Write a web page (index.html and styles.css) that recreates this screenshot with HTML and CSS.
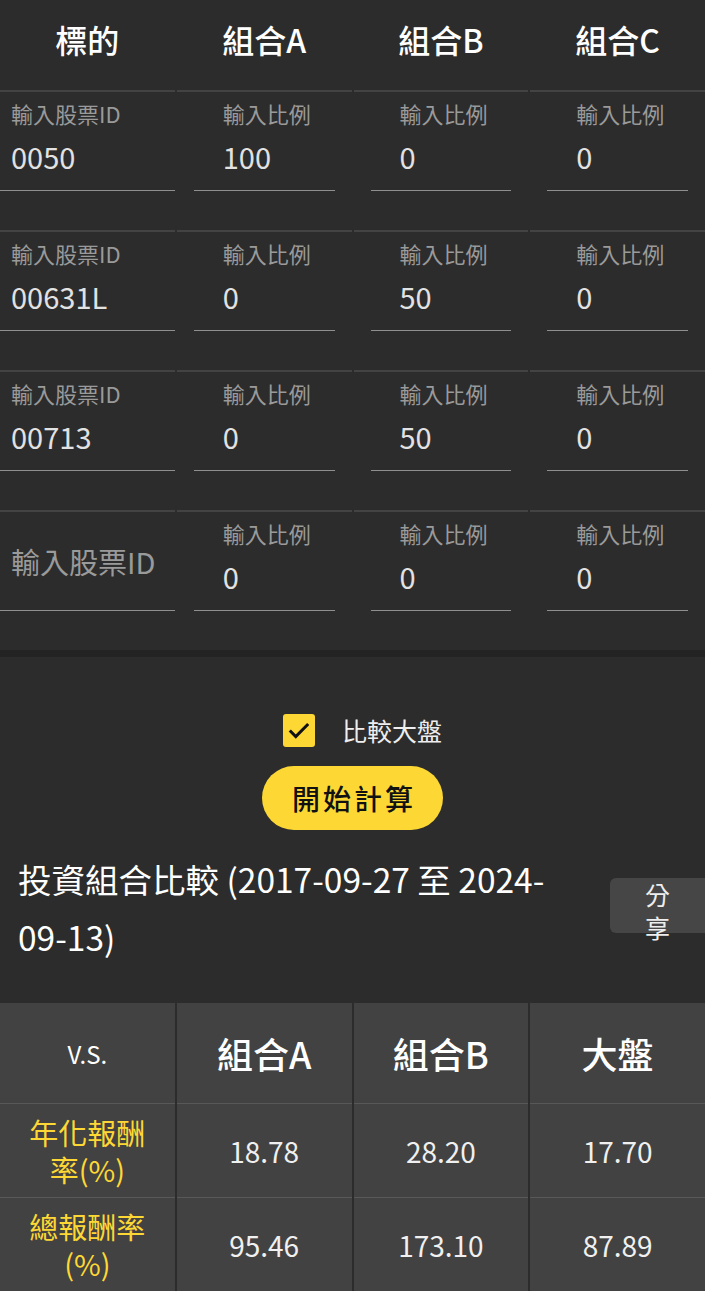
FILE: index.html
```html
<!DOCTYPE html>
<html lang="zh-Hant">
<head>
    <meta charset="UTF-8">
    <meta name="viewport" content="width=device-width, initial-scale=1.0">
    <title>投資組合比較</title>
    <link rel="stylesheet" href="styles.css">
</head>
<body>
    <div class="input-grid">
        <div class="head">標的</div>
        <div class="head">組合A</div>
        <div class="head">組合B</div>
        <div class="head">組合C</div>

        <div class="cell stock"><div class="field"><span class="field-label">輸入股票ID</span><span class="field-value">0050</span></div></div>
        <div class="cell"><div class="field"><span class="field-label">輸入比例</span><span class="field-value">100</span></div></div>
        <div class="cell"><div class="field"><span class="field-label">輸入比例</span><span class="field-value">0</span></div></div>
        <div class="cell"><div class="field"><span class="field-label">輸入比例</span><span class="field-value">0</span></div></div>

        <div class="cell stock"><div class="field"><span class="field-label">輸入股票ID</span><span class="field-value">00631L</span></div></div>
        <div class="cell"><div class="field"><span class="field-label">輸入比例</span><span class="field-value">0</span></div></div>
        <div class="cell"><div class="field"><span class="field-label">輸入比例</span><span class="field-value">50</span></div></div>
        <div class="cell"><div class="field"><span class="field-label">輸入比例</span><span class="field-value">0</span></div></div>

        <div class="cell stock"><div class="field"><span class="field-label">輸入股票ID</span><span class="field-value">00713</span></div></div>
        <div class="cell"><div class="field"><span class="field-label">輸入比例</span><span class="field-value">0</span></div></div>
        <div class="cell"><div class="field"><span class="field-label">輸入比例</span><span class="field-value">50</span></div></div>
        <div class="cell"><div class="field"><span class="field-label">輸入比例</span><span class="field-value">0</span></div></div>

        <div class="cell stock"><div class="field"><span class="field-placeholder">輸入股票ID</span></div></div>
        <div class="cell"><div class="field"><span class="field-label">輸入比例</span><span class="field-value">0</span></div></div>
        <div class="cell"><div class="field"><span class="field-label">輸入比例</span><span class="field-value">0</span></div></div>
        <div class="cell"><div class="field"><span class="field-label">輸入比例</span><span class="field-value">0</span></div></div>
    </div>
    <div class="grid-bottom"></div>

    <div class="actions">
        <label class="check-row">
            <span class="checkbox">
                <svg width="26" height="26" viewBox="0 0 24 24"><path d="M3.5 12.5l5.5 5.5L20.5 6.5" fill="none" stroke="#111" stroke-width="2.8"/></svg>
            </span>
            <span class="check-label">比較大盤</span>
        </label>
        <button class="calc-button">開始計算</button>
    </div>

    <div class="result-head">
        <h2 class="result-title">投資組合比較 (2017-09-27 至 2024-09-13)</h2>
        <button class="share-button">分享</button>
    </div>

    <div class="result-table">
        <div class="r-head vs">V.S.</div>
        <div class="r-head">組合A</div>
        <div class="r-head">組合B</div>
        <div class="r-head">大盤</div>

        <div class="r-cell r-label">年化報酬率(%)</div>
        <div class="r-cell">18.78</div>
        <div class="r-cell">28.20</div>
        <div class="r-cell">17.70</div>

        <div class="r-cell r-label">總報酬率(%)</div>
        <div class="r-cell">95.46</div>
        <div class="r-cell">173.10</div>
        <div class="r-cell">87.89</div>
    </div>
</body>
</html>
```

FILE: styles.css
```css
body {
    margin: 0;
    padding: 0;
    background-color: #2c2c2c;
    font-family: "Noto Sans CJK TC", "Noto Sans", sans-serif;
    color: #e6e6e6;
}

/* 輸入表格 */
.input-grid {
    display: grid;
    grid-template-columns: repeat(4, 1fr);
    column-gap: 2px;
}

.head {
    height: 78px;
    padding-bottom: 12px;
    display: flex;
    align-items: center;
    justify-content: center;
    font-size: 32px;
    font-weight: 500;
    color: #fff;
}

.cell {
    height: 138px;
    border-top: 2px solid #434343;
    padding: 0 17px;
}

.cell.stock {
    padding: 0;
}

.field {
    display: flex;
    flex-direction: column;
    padding: 8px 0 16px 29px;
    border-bottom: 1px solid #8f8f8f;
}

.stock .field {
    padding-left: 11px;
}

.field-label {
    font-size: 22px;
    line-height: 26px;
    color: #9a9a9a;
}

.field-value {
    margin-top: 12px;
    font-size: 29px;
    line-height: 36px;
    color: #e2e2e2;
}

.field-placeholder {
    margin: 23px 0 15px;
    font-size: 29px;
    line-height: 36px;
    color: #9a9a9a;
}

.grid-bottom {
    height: 7px;
    background-color: #232323;
}

/* 比較大盤 + 按鈕 */
.actions {
    display: flex;
    flex-direction: column;
    align-items: center;
    padding-top: 49px;
}

.check-row {
    display: flex;
    align-items: center;
    gap: 27px;
    height: 48px;
    padding-left: 20px;
}

.checkbox {
    width: 32px;
    height: 33px;
    border-radius: 3px;
    background-color: #fdd835;
    display: flex;
    align-items: center;
    justify-content: center;
}

.check-label {
    font-size: 25px;
    color: #eee;
}

.calc-button {
    margin-top: 12px;
    width: 181px;
    height: 64px;
    border: none;
    border-radius: 32px;
    background-color: #fdd835;
    color: #111;
    font-family: inherit;
    font-size: 28px;
    font-weight: 500;
    letter-spacing: 3px;
    padding: 0 0 0 3px;
}

/* 結果 */
.result-head {
    display: flex;
    align-items: center;
    margin-top: 20px;
}

.result-title {
    flex: 1;
    margin: 0;
    padding: 0 30px 0 18px;
    font-size: 33.5px;
    font-weight: normal;
    line-height: 58px;
    color: #fff;
}

.share-button {
    flex-shrink: 0;
    width: 95px;
    height: 55px;
    margin-top: -6px;
    padding: 0 34px 10px;
    border: none;
    border-radius: 6px 0 0 6px;
    background-color: #464646;
    color: #eee;
    font-family: inherit;
    font-size: 25px;
    line-height: 33px;
    overflow: visible;
}

.result-table {
    display: grid;
    grid-template-columns: repeat(4, 1fr);
    column-gap: 2px;
    margin-top: 37px;
}

.r-head,
.r-cell {
    display: flex;
    align-items: center;
    justify-content: center;
    text-align: center;
    background-color: #424242;
}

.r-head {
    height: 100px;
    font-size: 36px;
    font-weight: 500;
    color: #fff;
}

.r-head.vs {
    font-size: 24px;
    font-weight: normal;
}

.r-cell {
    height: 93px;
    border-top: 1px solid #585858;
    font-size: 28px;
    color: #f0f0f0;
}

.r-label {
    padding: 0 20px;
    font-size: 29px;
    line-height: 37px;
    color: #fdd835;
}
```
